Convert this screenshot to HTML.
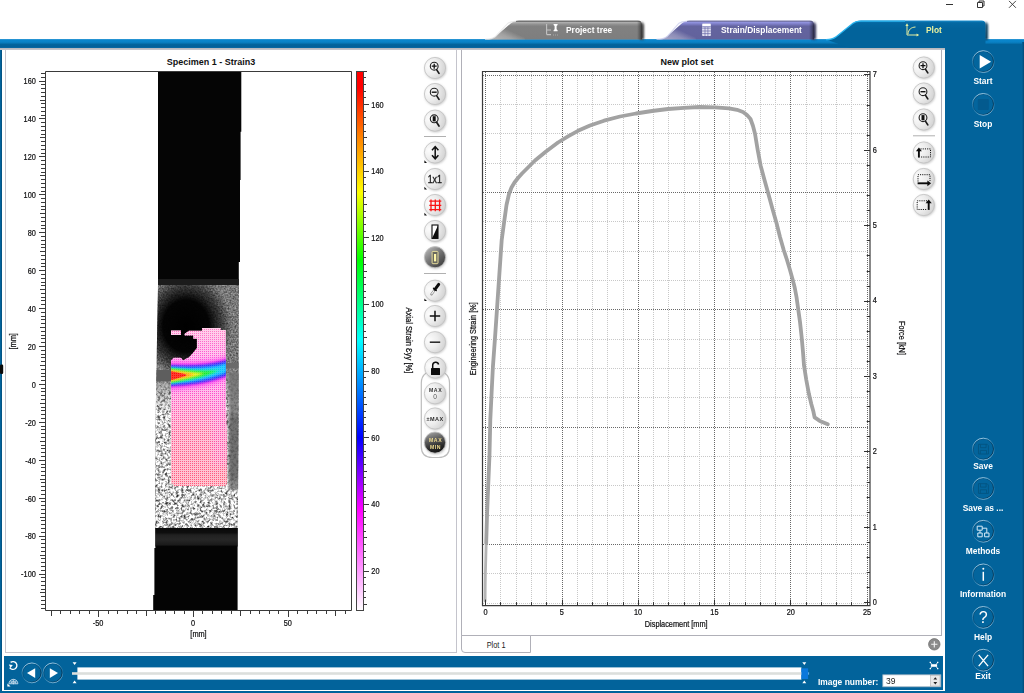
<!DOCTYPE html>
<html><head><meta charset="utf-8"><title>Plot</title>
<style>
html,body{margin:0;padding:0;}
body{width:1024px;height:693px;overflow:hidden;position:relative;background:#fff;font-family:"Liberation Sans",sans-serif;}
.abs{position:absolute;}
.lbl{position:absolute;color:#fff;font-weight:bold;font-size:10px;text-align:center;white-space:nowrap;width:78px;left:946px;}
svg{position:absolute;left:0;top:0;overflow:visible;will-change:transform;}
text{font-family:"Liberation Sans",sans-serif;}
</style></head><body>
<div class="abs" style="left:0;top:39px;width:1024px;height:9px;background:linear-gradient(#3f9fd8 0%,#0a86cc 12%,#0a82c6 35%,#02639b 62%,#02609a 85%,#0a6aa4 100%);"></div>
<div class="abs" style="left:0;top:48px;width:946px;height:2px;background:linear-gradient(#b4b4b8,#c8c8d0);"></div>
<div class="abs" style="left:0;top:49.5px;width:2px;height:644px;background:linear-gradient(90deg,#02639b 60%,#013a5e);"></div>
<div class="abs" style="left:944.9px;top:44px;width:79.1px;height:649px;background:#02639b;"></div>
<div class="abs" style="left:1021.5px;top:42px;width:2.5px;height:651px;background:linear-gradient(90deg,#02639b,#014a76);"></div>
<div class="abs" style="left:4.2px;top:656.2px;width:938.8px;height:33.5px;background:#02639b;"></div>
<div class="abs" style="left:0;top:691px;width:946px;height:2px;background:#02639b;"></div>
<div class="abs" style="left:5px;top:50px;width:452px;height:603px;border:1px solid #c4c4cc;border-top:none;box-sizing:border-box;background:#fff;"></div>
<div class="abs" style="left:461px;top:50px;width:481px;height:586px;border:1px solid #b0b0b8;border-top:none;box-sizing:border-box;background:#fff;"></div>
<div class="abs" style="left:461px;top:635px;width:70px;height:18px;border:1px solid #b0b0b8;border-radius:0 0 0 4px;box-sizing:border-box;background:#fff;font-size:8.4px;color:#222;text-align:center;line-height:18px;text-indent:0.4px;"><span style="display:inline-block;transform:scaleX(0.88)">Plot 1</span></div>
<div class="abs" style="left:110.7px;top:55.6px;width:200px;text-align:center;font-weight:bold;font-size:9.6px;color:#111;transform:scaleX(0.9375);">Specimen 1 - Strain3</div>
<div class="abs" style="left:587.2px;top:55.6px;width:200px;text-align:center;font-weight:bold;font-size:9.6px;color:#111;transform:scaleX(0.9375);">New plot set</div>
<svg width="1024" height="693" viewBox="0 0 1024 693">
<defs>
<linearGradient id="cbar" x1="0" y1="0" x2="0" y2="1"><stop offset="0" stop-color="#ff0000"/><stop offset="0.03" stop-color="#ff0000"/><stop offset="0.12" stop-color="#ff8000"/><stop offset="0.2245" stop-color="#ffff00"/><stop offset="0.35" stop-color="#00ff00"/><stop offset="0.4985" stop-color="#00ffff"/><stop offset="0.679" stop-color="#0000ff"/><stop offset="0.813" stop-color="#ff00ff"/><stop offset="1" stop-color="#ffffff"/></linearGradient>
<filter id="spk" x="0" y="0" width="100%" height="100%" color-interpolation-filters="sRGB"><feTurbulence type="fractalNoise" baseFrequency="0.6" numOctaves="2" seed="7" result="n"/><feColorMatrix in="n" type="matrix" values="0.6 0 0 0 0.17  0.6 0 0 0 0.17  0.6 0 0 0 0.17  0 0 0 0 1"/><feGaussianBlur stdDeviation="0.5"/></filter>
<filter id="spk2" x="0" y="0" width="100%" height="100%" color-interpolation-filters="sRGB"><feTurbulence type="fractalNoise" baseFrequency="0.38" numOctaves="3" seed="11" result="n"/><feColorMatrix in="n" type="matrix" values="0 1.9 0 0 -0.14  0 1.9 0 0 -0.14  0 1.9 0 0 -0.14  0 0 0 0 1"/><feGaussianBlur stdDeviation="0.5"/></filter>
<linearGradient id="mk" x1="0" y1="0" x2="0" y2="1"><stop offset="0.33" stop-color="#000"/><stop offset="0.52" stop-color="#fff"/></linearGradient>
<mask id="lowmask" maskUnits="userSpaceOnUse" x="150" y="280" width="95" height="255"><rect x="150" y="280" width="95" height="255" fill="url(#mk)"/></mask>
<linearGradient id="grip2" x1="0" y1="0" x2="0" y2="1"><stop offset="0" stop-color="#0a0a0a"/><stop offset="0.25" stop-color="#0e0e0e"/><stop offset="0.38" stop-color="#212121"/><stop offset="0.62" stop-color="#272727"/><stop offset="0.9" stop-color="#1b1b1b"/><stop offset="1" stop-color="#050505"/></linearGradient>
<filter id="b05"><feGaussianBlur stdDeviation="0.6"/></filter>
<linearGradient id="pinkg" x1="0" y1="0" x2="0" y2="1"><stop offset="0" stop-color="#ff82c4"/><stop offset="0.12" stop-color="#ff62cc"/><stop offset="0.3" stop-color="#ff44dc"/><stop offset="0.45" stop-color="#ff50bc"/><stop offset="0.65" stop-color="#ff5690"/><stop offset="1" stop-color="#ff5a7a"/></linearGradient>
<filter id="b1"><feGaussianBlur stdDeviation="0.9"/></filter>
<filter id="b2"><feGaussianBlur stdDeviation="2"/></filter>
<filter id="b5"><feGaussianBlur stdDeviation="5"/></filter>
<radialGradient id="blob" cx="0.5" cy="0.5" r="0.5"><stop offset="0" stop-color="#000" stop-opacity="1"/><stop offset="0.5" stop-color="#000" stop-opacity="0.97"/><stop offset="0.78" stop-color="#000" stop-opacity="0.5"/><stop offset="1" stop-color="#000" stop-opacity="0"/></radialGradient>
<linearGradient id="shade" x1="0" y1="0" x2="0" y2="1"><stop offset="0" stop-color="#000" stop-opacity="0.45"/><stop offset="0.35" stop-color="#000" stop-opacity="0.3"/><stop offset="0.6" stop-color="#fff" stop-opacity="0.0"/><stop offset="1" stop-color="#fff" stop-opacity="0.12"/></linearGradient>
<pattern id="grid" width="1.9" height="1.9" patternUnits="userSpaceOnUse" x="171" y="328"><rect width="1.9" height="1.9" fill="#fff" fill-opacity="0.55"/><rect width="1.9" height="0.8" fill="#ff3058" fill-opacity="0.5"/><rect width="0.8" height="1.9" fill="#ff3058" fill-opacity="0.5"/></pattern>
<clipPath id="ovl"><polygon points="184.6,333.7 189,330.8 202,330.8 202,328 220.7,328 220.7,330 225.8,330 225.8,395 226.8,440 226.8,484 225,486 174,486 173.5,484 171,483 171,360.4 173.8,357.8 181,357.8 183.2,360.4 185.4,359 189,357.2 193.3,352.5 196.9,348.1 196.9,338.8 193.3,338.8 193.3,335.6 184.6,335.6"/><polygon points="171,330.4 181,330.4 181,335 171,335"/></clipPath>
<clipPath id="spec"><polygon points="158,285 239,285 238.6,400 237.8,528.5 155.2,528.5 155.6,420 157,340"/></clipPath>
</defs><defs>
<radialGradient id="btn" cx="0.22" cy="0.4" r="0.85"><stop offset="0" stop-color="#fcfcfc"/><stop offset="0.5" stop-color="#ececec"/><stop offset="1" stop-color="#cfcfcf"/></radialGradient>
<linearGradient id="btnd" x1="0.15" y1="0.1" x2="0.85" y2="0.9"><stop offset="0" stop-color="#b0b0b0"/><stop offset="0.4" stop-color="#7c7c7c"/><stop offset="1" stop-color="#3e3e3e"/></linearGradient>
<linearGradient id="btnk" x1="0.3" y1="0" x2="0.6" y2="1"><stop offset="0" stop-color="#a0a0a0"/><stop offset="0.35" stop-color="#606060"/><stop offset="0.75" stop-color="#262626"/><stop offset="1" stop-color="#141414"/></linearGradient>
<linearGradient id="ring" x1="0.15" y1="0.1" x2="0.85" y2="0.9"><stop offset="0" stop-color="#9cc6e2"/><stop offset="0.5" stop-color="#3c86b4"/><stop offset="1" stop-color="#05304e"/></linearGradient>
<linearGradient id="ringL" x1="0.3" y1="0" x2="0.6" y2="1"><stop offset="0" stop-color="#c4e2f4" stop-opacity="0.95"/><stop offset="0.35" stop-color="#9ccbe6" stop-opacity="0.35"/><stop offset="0.6" stop-color="#9ccbe6" stop-opacity="0.15"/><stop offset="1" stop-color="#b0d6ee" stop-opacity="0.75"/></linearGradient>
<linearGradient id="ringD" x1="0" y1="0.2" x2="1" y2="0.7"><stop offset="0" stop-color="#0a3a5c" stop-opacity="0.7"/><stop offset="0.4" stop-color="#0a3a5c" stop-opacity="0.25"/><stop offset="1" stop-color="#03263e" stop-opacity="0.95"/></linearGradient>
<linearGradient id="tabg" x1="0" y1="0" x2="0" y2="1"><stop offset="0" stop-color="#6c6c6c"/><stop offset="0.05" stop-color="#707070"/><stop offset="0.1" stop-color="#aeaeae"/><stop offset="0.2" stop-color="#929292"/><stop offset="0.3" stop-color="#818181"/><stop offset="1" stop-color="#7e7e7e"/></linearGradient>
<linearGradient id="tabp" x1="0" y1="0" x2="0" y2="1"><stop offset="0" stop-color="#7272a6"/><stop offset="0.05" stop-color="#7676aa"/><stop offset="0.1" stop-color="#9092de"/><stop offset="0.2" stop-color="#7a7ac2"/><stop offset="0.3" stop-color="#64649f"/><stop offset="1" stop-color="#62629c"/></linearGradient>
<linearGradient id="tabb" x1="0" y1="0" x2="0" y2="1"><stop offset="0" stop-color="#1a8fd0"/><stop offset="0.08" stop-color="#0468a2"/><stop offset="0.3" stop-color="#02639b"/><stop offset="1" stop-color="#02639b"/></linearGradient>
<linearGradient id="tabedge" x1="0" y1="0" x2="1" y2="0"><stop offset="0" stop-color="#000" stop-opacity="0"/><stop offset="0.6" stop-color="#000" stop-opacity="0.3"/><stop offset="1" stop-color="#000" stop-opacity="0.6"/></linearGradient>
<linearGradient id="tabsl" x1="0" y1="1" x2="0.75" y2="0.2"><stop offset="0" stop-color="#fff" stop-opacity="0.9"/><stop offset="0.45" stop-color="#fff" stop-opacity="0.5"/><stop offset="0.7" stop-color="#fff" stop-opacity="0"/></linearGradient>
<filter id="sh1" x="-20%" y="-20%" width="150%" height="150%"><feGaussianBlur stdDeviation="0.8"/></filter>
</defs><g id="leftplot">
<path d="M158,72 H241.3 V131.8 H240.6 V180 H240 V262 H238.8 V285 H158 Z" fill="#050505"/>
<rect x="158" y="279" width="80.8" height="6.5" fill="#1c1c1c"/>
<g clip-path="url(#spec)">
<rect x="155" y="285" width="84" height="244" fill="#999" filter="url(#spk)"/>
<g mask="url(#lowmask)"><rect x="155" y="285" width="84" height="244" fill="#999" filter="url(#spk2)"/></g>
<rect x="228.5" y="372" width="12" height="118" fill="#6c6c6c" fill-opacity="0.78" filter="url(#b1)"/>
<rect x="229" y="415" width="11" height="65" fill="#3c3c3c" fill-opacity="0.35" filter="url(#b2)"/>
<ellipse cx="186" cy="326" rx="46" ry="52" fill="url(#blob)"/>
<rect x="155" y="370" width="16.5" height="11.5" fill="#5e5e5e"/>
<rect x="226" y="363" width="13" height="5.5" fill="#6a6a6a"/>
</g>
<path d="M155.4,528 H237.6 V610 H153.2 V595 H154.4 V548 H155.4 Z" fill="#040404"/>
<rect x="155.4" y="528" width="82.2" height="18.5" fill="url(#grip2)"/>
<g clip-path="url(#ovl)">
<rect x="170" y="327" width="58" height="160" fill="url(#pinkg)"/>
<rect x="212" y="385" width="16" height="80" fill="#ff40e0" fill-opacity="0.35" filter="url(#b5)"/>
<path d="M171.5,327V488M173.5,327V488M175.5,327V488M177.5,327V488M179.5,327V488M181.5,327V488M183.5,327V488M185.5,327V488M187.5,327V488M189.5,327V488M191.5,327V488M193.5,327V488M195.5,327V488M197.5,327V488M199.5,327V488M201.5,327V488M203.5,327V488M205.5,327V488M207.5,327V488M209.5,327V488M211.5,327V488M213.5,327V488M215.5,327V488M217.5,327V488M219.5,327V488M221.5,327V488M223.5,327V488M225.5,327V488M227.5,327V488M170,328.5H228M170,330.5H228M170,332.5H228M170,334.5H228M170,336.5H228M170,338.5H228M170,340.5H228M170,342.5H228M170,344.5H228M170,346.5H228M170,348.5H228M170,350.5H228M170,352.5H228M170,354.5H228M170,356.5H228M170,358.5H228M170,360.5H228M170,362.5H228M170,364.5H228M170,366.5H228M170,368.5H228M170,370.5H228M170,372.5H228M170,374.5H228M170,376.5H228M170,378.5H228M170,380.5H228M170,382.5H228M170,384.5H228M170,386.5H228M170,388.5H228M170,390.5H228M170,392.5H228M170,394.5H228M170,396.5H228M170,398.5H228M170,400.5H228M170,402.5H228M170,404.5H228M170,406.5H228M170,408.5H228M170,410.5H228M170,412.5H228M170,414.5H228M170,416.5H228M170,418.5H228M170,420.5H228M170,422.5H228M170,424.5H228M170,426.5H228M170,428.5H228M170,430.5H228M170,432.5H228M170,434.5H228M170,436.5H228M170,438.5H228M170,440.5H228M170,442.5H228M170,444.5H228M170,446.5H228M170,448.5H228M170,450.5H228M170,452.5H228M170,454.5H228M170,456.5H228M170,458.5H228M170,460.5H228M170,462.5H228M170,464.5H228M170,466.5H228M170,468.5H228M170,470.5H228M170,472.5H228M170,474.5H228M170,476.5H228M170,478.5H228M170,480.5H228M170,482.5H228M170,484.5H228M170,486.5H228" stroke="#fff" stroke-opacity="0.56" stroke-width="1" fill="none" shape-rendering="crispEdges"/>
<polygon points="166,360.75 168.5,360.67 171,360.6 173.5,360.69 176,360.77 178.5,360.84 181,360.91 183.5,360.96 186,361 188.5,361.01 191,361 193.5,360.97 196,360.9 198.5,360.8 201,360.66 203.5,360.48 206,360.26 208.5,359.99 211,359.67 213.5,359.3 216,358.87 218.5,358.38 221,357.82 223.5,357.2 226,356.5 228.5,355.57 231,354.56 231,377.56 228.5,378.57 226,379.5 223.5,380.51 221,381.46 218.5,382.33 216,383.14 213.5,383.89 211,384.58 208.5,385.22 206,385.81 203.5,386.35 201,386.84 198.5,387.3 196,387.72 193.5,388.1 191,388.46 188.5,388.78 186,389.09 183.5,389.37 181,389.64 178.5,389.89 176,390.13 173.5,390.37 171,390.6 168.5,390.67 166,390.75" fill="#ff50ea" filter="url(#b2)"/>
<polygon points="166,363.85 168.5,363.77 171,363.7 173.5,363.75 176,363.8 178.5,363.83 181,363.86 183.5,363.88 186,363.88 188.5,363.86 191,363.81 193.5,363.74 196,363.64 198.5,363.5 201,363.33 203.5,363.11 206,362.85 208.5,362.55 211,362.19 213.5,361.78 216,361.31 218.5,360.79 221,360.19 223.5,359.53 226,358.8 228.5,357.87 231,356.86 231,375.26 228.5,376.27 226,377.2 223.5,378.18 221,379.08 218.5,379.92 216,380.7 213.5,381.41 211,382.06 208.5,382.67 206,383.22 203.5,383.72 201,384.18 198.5,384.6 196,384.98 193.5,385.33 191,385.65 188.5,385.94 186,386.21 183.5,386.45 181,386.68 178.5,386.9 176,387.1 173.5,387.3 171,387.5 168.5,387.57 166,387.65" fill="#ee20f0" filter="url(#b1)"/>
<polygon points="166,365.15 168.5,365.07 171,365 173.5,365.05 176,365.1 178.5,365.13 181,365.16 183.5,365.18 186,365.18 188.5,365.16 191,365.11 193.5,365.04 196,364.94 198.5,364.8 201,364.63 203.5,364.41 206,364.15 208.5,363.85 211,363.49 213.5,363.08 216,362.61 218.5,362.09 221,361.49 223.5,360.83 226,360.1 228.5,359.17 231,358.16 231,373.96 228.5,374.97 226,375.9 223.5,376.88 221,377.78 218.5,378.62 216,379.4 213.5,380.11 211,380.76 208.5,381.37 206,381.92 203.5,382.42 201,382.88 198.5,383.3 196,383.68 193.5,384.03 191,384.35 188.5,384.64 186,384.91 183.5,385.15 181,385.38 178.5,385.6 176,385.8 173.5,386 171,386.2 168.5,386.27 166,386.35" fill="#7010f0" filter="url(#b1)"/>
<polygon points="166,366.15 168.5,366.07 171,366 173.5,366.05 176,366.1 178.5,366.15 181,366.18 183.5,366.2 186,366.21 188.5,366.19 191,366.15 193.5,366.08 196,365.98 198.5,365.85 201,365.68 203.5,365.47 206,365.22 208.5,364.92 211,364.56 213.5,364.16 216,363.7 218.5,363.17 221,362.58 223.5,361.93 226,361.2 228.5,360.27 231,359.26 231,372.86 228.5,373.87 226,374.8 223.5,375.78 221,376.69 218.5,377.54 216,378.31 213.5,379.03 211,379.69 208.5,380.3 206,380.85 203.5,381.36 201,381.83 198.5,382.25 196,382.64 193.5,382.99 191,383.31 188.5,383.61 186,383.88 183.5,384.13 181,384.36 178.5,384.58 176,384.8 173.5,385 171,385.2 168.5,385.27 166,385.35" fill="#1030ff" filter="url(#b1)"/>
<polygon points="166,367.55 168.5,367.47 171,367.4 173.5,367.5 176,367.6 178.5,367.68 181,367.76 183.5,367.83 186,367.88 188.5,367.91 191,367.91 193.5,367.89 196,367.84 198.5,367.75 201,367.63 203.5,367.46 206,367.25 208.5,367 211,366.69 213.5,366.33 216,365.91 218.5,365.44 221,364.89 223.5,364.28 226,363.6 228.5,362.67 231,361.66 231,370.46 228.5,371.47 226,372.4 223.5,373.43 221,374.38 218.5,375.27 216,376.1 213.5,376.86 211,377.56 208.5,378.22 206,378.82 203.5,379.37 201,379.88 198.5,380.35 196,380.78 193.5,381.18 191,381.55 188.5,381.89 186,382.21 183.5,382.5 181,382.78 178.5,383.05 176,383.3 173.5,383.55 171,383.8 168.5,383.87 166,383.95" fill="#00c0ff" filter="url(#b1)"/>
<polygon points="166,367.76 168.5,367.98 171,368.2 173.5,368.42 176,368.65 178.5,368.87 181,369.08 183.5,369.29 186,369.48 188.5,369.65 191,369.81 193.5,369.95 196,370.06 198.5,370.14 201,370.2 203.5,370.22 206,370.21 208.5,370.17 211,370.09 213.5,369.97 216,369.83 218.5,369.68 221,369.64 221,369.64 218.5,371.03 216,372.18 213.5,373.22 211,374.17 208.5,375.05 206,375.86 203.5,376.61 201,377.31 198.5,377.96 196,378.56 193.5,379.12 191,379.65 188.5,380.14 186,380.6 183.5,381.04 181,381.46 178.5,381.86 176,382.25 173.5,382.63 171,383 168.5,383.37 166,383.74" fill="#00f0a0" filter="url(#b1)"/>
<polygon points="166,368.13 168.5,368.36 171,368.6 173.5,368.84 176,369.08 178.5,369.32 181,369.55 183.5,369.77 186,369.98 188.5,370.18 191,370.36 193.5,370.51 196,370.65 198.5,370.76 201,370.85 203.5,370.9 206,370.93 208.5,370.94 211,370.92 213.5,370.9 216,371 216,371 213.5,372.29 211,373.34 208.5,374.28 206,375.14 203.5,375.93 201,376.66 198.5,377.34 196,377.97 193.5,378.56 191,379.1 188.5,379.62 186,380.1 183.5,380.56 181,381 178.5,381.42 176,381.82 173.5,382.21 171,382.6 168.5,382.98 166,383.37" fill="#10e820" filter="url(#b1)"/>
<polygon points="166,369.26 168.5,369.52 171,369.8 173.5,370.08 176,370.36 178.5,370.65 181,370.93 183.5,371.2 186,371.47 188.5,371.73 191,371.98 193.5,372.21 196,372.44 198.5,372.67 201,372.9 203.5,373.21 203.5,373.62 201,374.61 198.5,375.43 196,376.18 193.5,376.86 191,377.48 188.5,378.07 186,378.61 183.5,379.13 181,379.62 178.5,380.09 176,380.54 173.5,380.97 171,381.4 168.5,381.82 166,382.24" fill="#f4f000" filter="url(#b1)"/>
<polygon points="166,369.9 168.5,370.24 171,370.6 173.5,370.97 176,371.34 178.5,371.72 181,372.11 183.5,372.5 186,372.89 188.5,373.31 191,373.75 193.5,374.3 193.5,374.77 191,375.71 188.5,376.49 186,377.19 183.5,377.84 181,378.44 178.5,379.01 176,379.56 173.5,380.09 171,380.6 168.5,381.1 166,381.6" fill="#ff9000" filter="url(#b1)"/>
<polygon points="166,370.31 168.5,370.75 171,371.2 173.5,371.67 176,372.15 178.5,372.66 181,373.18 183.5,373.75 186,374.4 186,375.69 183.5,376.58 181,377.36 178.5,378.08 176,378.75 173.5,379.38 171,380 168.5,380.6 166,381.19" fill="#ff1000" filter="url(#b05)"/>
<path d="M171.5,327V488M173.5,327V488M175.5,327V488M177.5,327V488M179.5,327V488M181.5,327V488M183.5,327V488M185.5,327V488M187.5,327V488M189.5,327V488M191.5,327V488M193.5,327V488M195.5,327V488M197.5,327V488M199.5,327V488M201.5,327V488M203.5,327V488M205.5,327V488M207.5,327V488M209.5,327V488M211.5,327V488M213.5,327V488M215.5,327V488M217.5,327V488M219.5,327V488M221.5,327V488M223.5,327V488M225.5,327V488M227.5,327V488M170,328.5H228M170,330.5H228M170,332.5H228M170,334.5H228M170,336.5H228M170,338.5H228M170,340.5H228M170,342.5H228M170,344.5H228M170,346.5H228M170,348.5H228M170,350.5H228M170,352.5H228M170,354.5H228M170,356.5H228M170,358.5H228M170,360.5H228M170,362.5H228M170,364.5H228M170,366.5H228M170,368.5H228M170,370.5H228M170,372.5H228M170,374.5H228M170,376.5H228M170,378.5H228M170,380.5H228M170,382.5H228M170,384.5H228M170,386.5H228M170,388.5H228M170,390.5H228M170,392.5H228M170,394.5H228M170,396.5H228M170,398.5H228M170,400.5H228M170,402.5H228M170,404.5H228M170,406.5H228M170,408.5H228M170,410.5H228M170,412.5H228M170,414.5H228M170,416.5H228M170,418.5H228M170,420.5H228M170,422.5H228M170,424.5H228M170,426.5H228M170,428.5H228M170,430.5H228M170,432.5H228M170,434.5H228M170,436.5H228M170,438.5H228M170,440.5H228M170,442.5H228M170,444.5H228M170,446.5H228M170,448.5H228M170,450.5H228M170,452.5H228M170,454.5H228M170,456.5H228M170,458.5H228M170,460.5H228M170,462.5H228M170,464.5H228M170,466.5H228M170,468.5H228M170,470.5H228M170,472.5H228M170,474.5H228M170,476.5H228M170,478.5H228M170,480.5H228M170,482.5H228M170,484.5H228M170,486.5H228" stroke="#fff" stroke-opacity="0.2" stroke-width="1" fill="none" shape-rendering="crispEdges"/>
</g>
<path d="M45.5,71.5 V610.5 H351.5 V71.5 Z" fill="none" stroke="#3a3a3a" stroke-width="1"/>
<path d="M41.2,608.13h4.3M41.2,604.34h4.3M41.2,600.54h4.3M41.2,596.75h4.3M40.1,592.96h5.4M41.2,589.17h4.3M41.2,585.38h4.3M41.2,581.58h4.3M41.2,577.79h4.3M39,574h6.5M41.2,570.21h4.3M41.2,566.42h4.3M41.2,562.62h4.3M41.2,558.83h4.3M40.1,555.04h5.4M41.2,551.25h4.3M41.2,547.46h4.3M41.2,543.66h4.3M41.2,539.87h4.3M39,536.08h6.5M41.2,532.29h4.3M41.2,528.5h4.3M41.2,524.7h4.3M41.2,520.91h4.3M40.1,517.12h5.4M41.2,513.33h4.3M41.2,509.54h4.3M41.2,505.74h4.3M41.2,501.95h4.3M39,498.16h6.5M41.2,494.37h4.3M41.2,490.58h4.3M41.2,486.78h4.3M41.2,482.99h4.3M40.1,479.2h5.4M41.2,475.41h4.3M41.2,471.62h4.3M41.2,467.82h4.3M41.2,464.03h4.3M39,460.24h6.5M41.2,456.45h4.3M41.2,452.66h4.3M41.2,448.86h4.3M41.2,445.07h4.3M40.1,441.28h5.4M41.2,437.49h4.3M41.2,433.7h4.3M41.2,429.9h4.3M41.2,426.11h4.3M39,422.32h6.5M41.2,418.53h4.3M41.2,414.74h4.3M41.2,410.94h4.3M41.2,407.15h4.3M40.1,403.36h5.4M41.2,399.57h4.3M41.2,395.78h4.3M41.2,391.98h4.3M41.2,388.19h4.3M39,384.4h6.5M41.2,380.61h4.3M41.2,376.82h4.3M41.2,373.02h4.3M41.2,369.23h4.3M40.1,365.44h5.4M41.2,361.65h4.3M41.2,357.86h4.3M41.2,354.06h4.3M41.2,350.27h4.3M39,346.48h6.5M41.2,342.69h4.3M41.2,338.9h4.3M41.2,335.1h4.3M41.2,331.31h4.3M40.1,327.52h5.4M41.2,323.73h4.3M41.2,319.94h4.3M41.2,316.14h4.3M41.2,312.35h4.3M39,308.56h6.5M41.2,304.77h4.3M41.2,300.98h4.3M41.2,297.18h4.3M41.2,293.39h4.3M40.1,289.6h5.4M41.2,285.81h4.3M41.2,282.02h4.3M41.2,278.22h4.3M41.2,274.43h4.3M39,270.64h6.5M41.2,266.85h4.3M41.2,263.06h4.3M41.2,259.26h4.3M41.2,255.47h4.3M40.1,251.68h5.4M41.2,247.89h4.3M41.2,244.1h4.3M41.2,240.3h4.3M41.2,236.51h4.3M39,232.72h6.5M41.2,228.93h4.3M41.2,225.14h4.3M41.2,221.34h4.3M41.2,217.55h4.3M40.1,213.76h5.4M41.2,209.97h4.3M41.2,206.18h4.3M41.2,202.38h4.3M41.2,198.59h4.3M39,194.8h6.5M41.2,191.01h4.3M41.2,187.22h4.3M41.2,183.42h4.3M41.2,179.63h4.3M40.1,175.84h5.4M41.2,172.05h4.3M41.2,168.26h4.3M41.2,164.46h4.3M41.2,160.67h4.3M39,156.88h6.5M41.2,153.09h4.3M41.2,149.3h4.3M41.2,145.5h4.3M41.2,141.71h4.3M40.1,137.92h5.4M41.2,134.13h4.3M41.2,130.34h4.3M41.2,126.54h4.3M41.2,122.75h4.3M39,118.96h6.5M41.2,115.17h4.3M41.2,111.38h4.3M41.2,107.58h4.3M41.2,103.79h4.3M40.1,100h5.4M41.2,96.21h4.3M41.2,92.42h4.3M41.2,88.62h4.3M41.2,84.83h4.3M39,81.04h6.5M41.2,77.25h4.3M41.2,73.46h4.3" stroke="#3a3a3a" stroke-width="1" fill="none" shape-rendering="crispEdges"/>
<text transform="translate(35.8,577.4) scale(0.875,1)" font-size="8.4" text-anchor="end" fill="#101012" stroke="#101012" stroke-width="0.22">-100</text>
<text transform="translate(35.8,539.48) scale(0.875,1)" font-size="8.4" text-anchor="end" fill="#101012" stroke="#101012" stroke-width="0.22">-80</text>
<text transform="translate(35.8,501.56) scale(0.875,1)" font-size="8.4" text-anchor="end" fill="#101012" stroke="#101012" stroke-width="0.22">-60</text>
<text transform="translate(35.8,463.64) scale(0.875,1)" font-size="8.4" text-anchor="end" fill="#101012" stroke="#101012" stroke-width="0.22">-40</text>
<text transform="translate(35.8,425.72) scale(0.875,1)" font-size="8.4" text-anchor="end" fill="#101012" stroke="#101012" stroke-width="0.22">-20</text>
<text transform="translate(35.8,387.8) scale(0.875,1)" font-size="8.4" text-anchor="end" fill="#101012" stroke="#101012" stroke-width="0.22">0</text>
<text transform="translate(35.8,349.88) scale(0.875,1)" font-size="8.4" text-anchor="end" fill="#101012" stroke="#101012" stroke-width="0.22">20</text>
<text transform="translate(35.8,311.96) scale(0.875,1)" font-size="8.4" text-anchor="end" fill="#101012" stroke="#101012" stroke-width="0.22">40</text>
<text transform="translate(35.8,274.04) scale(0.875,1)" font-size="8.4" text-anchor="end" fill="#101012" stroke="#101012" stroke-width="0.22">60</text>
<text transform="translate(35.8,236.12) scale(0.875,1)" font-size="8.4" text-anchor="end" fill="#101012" stroke="#101012" stroke-width="0.22">80</text>
<text transform="translate(35.8,198.2) scale(0.875,1)" font-size="8.4" text-anchor="end" fill="#101012" stroke="#101012" stroke-width="0.22">100</text>
<text transform="translate(35.8,160.28) scale(0.875,1)" font-size="8.4" text-anchor="end" fill="#101012" stroke="#101012" stroke-width="0.22">120</text>
<text transform="translate(35.8,122.36) scale(0.875,1)" font-size="8.4" text-anchor="end" fill="#101012" stroke="#101012" stroke-width="0.22">140</text>
<text transform="translate(35.8,84.44) scale(0.875,1)" font-size="8.4" text-anchor="end" fill="#101012" stroke="#101012" stroke-width="0.22">160</text>
<path d="M51.22,610.5v5M60.71,610.5v3M70.19,610.5v3M79.68,610.5v3M89.16,610.5v3M98.65,610.5v6M108.14,610.5v3M117.62,610.5v3M127.11,610.5v3M136.59,610.5v3M146.07,610.5v5M155.56,610.5v3M165.04,610.5v3M174.53,610.5v3M184.01,610.5v3M193.5,610.5v6M202.99,610.5v3M212.47,610.5v3M221.96,610.5v3M231.44,610.5v3M240.93,610.5v5M250.41,610.5v3M259.89,610.5v3M269.38,610.5v3M278.87,610.5v3M288.35,610.5v6M297.84,610.5v3M307.32,610.5v3M316.81,610.5v3M326.29,610.5v3M335.77,610.5v5M345.26,610.5v3" stroke="#3a3a3a" stroke-width="1" fill="none" shape-rendering="crispEdges"/>
<text transform="translate(98.15,626) scale(0.875,1)" font-size="8.4" text-anchor="middle" fill="#101012" stroke="#101012" stroke-width="0.22">-50</text>
<text transform="translate(193,626) scale(0.875,1)" font-size="8.4" text-anchor="middle" fill="#101012" stroke="#101012" stroke-width="0.22">0</text>
<text transform="translate(287.85,626) scale(0.875,1)" font-size="8.4" text-anchor="middle" fill="#101012" stroke="#101012" stroke-width="0.22">50</text>
<text transform="translate(198.5,636.5) scale(0.875,1)" font-size="8.4" text-anchor="middle" fill="#101012" stroke="#101012" stroke-width="0.22">[mm]</text>
<text transform="translate(15.6,341.3) rotate(-90) scale(0.875,1)" font-size="8.4" text-anchor="middle" fill="#101012" stroke="#101012" stroke-width="0.22">[mm]</text>
<rect x="356.5" y="71.5" width="7" height="539" fill="url(#cbar)" stroke="#444" stroke-width="1"/>
<path d="M364,604.42h3M364,597.76h2M364,591.09h2M364,584.43h2M364,577.76h2M364,571.1h4.5M364,564.44h2M364,557.77h2M364,551.11h2M364,544.44h2M364,537.78h3M364,531.12h2M364,524.45h2M364,517.79h2M364,511.12h2M364,504.46h4.5M364,497.8h2M364,491.13h2M364,484.47h2M364,477.8h2M364,471.14h3M364,464.48h2M364,457.81h2M364,451.15h2M364,444.48h2M364,437.82h4.5M364,431.16h2M364,424.49h2M364,417.83h2M364,411.16h2M364,404.5h3M364,397.84h2M364,391.17h2M364,384.51h2M364,377.84h2M364,371.18h4.5M364,364.52h2M364,357.85h2M364,351.19h2M364,344.52h2M364,337.86h3M364,331.2h2M364,324.53h2M364,317.87h2M364,311.2h2M364,304.54h4.5M364,297.88h2M364,291.21h2M364,284.55h2M364,277.88h2M364,271.22h3M364,264.56h2M364,257.89h2M364,251.23h2M364,244.56h2M364,237.9h4.5M364,231.24h2M364,224.57h2M364,217.91h2M364,211.24h2M364,204.58h3M364,197.92h2M364,191.25h2M364,184.59h2M364,177.92h2M364,171.26h4.5M364,164.6h2M364,157.93h2M364,151.27h2M364,144.6h2M364,137.94h3M364,131.28h2M364,124.61h2M364,117.95h2M364,111.28h2M364,104.62h4.5M364,97.96h2M364,91.29h2M364,84.63h2M364,77.96h2M364,71.3h3" stroke="#3a3a3a" stroke-width="1" fill="none" shape-rendering="crispEdges"/>
<text transform="translate(371.3,574) scale(0.875,1)" font-size="8.4" text-anchor="start" fill="#101012" stroke="#101012" stroke-width="0.22">20</text>
<text transform="translate(371.3,507.36) scale(0.875,1)" font-size="8.4" text-anchor="start" fill="#101012" stroke="#101012" stroke-width="0.22">40</text>
<text transform="translate(371.3,440.72) scale(0.875,1)" font-size="8.4" text-anchor="start" fill="#101012" stroke="#101012" stroke-width="0.22">60</text>
<text transform="translate(371.3,374.08) scale(0.875,1)" font-size="8.4" text-anchor="start" fill="#101012" stroke="#101012" stroke-width="0.22">80</text>
<text transform="translate(371.3,307.44) scale(0.875,1)" font-size="8.4" text-anchor="start" fill="#101012" stroke="#101012" stroke-width="0.22">100</text>
<text transform="translate(371.3,240.8) scale(0.875,1)" font-size="8.4" text-anchor="start" fill="#101012" stroke="#101012" stroke-width="0.22">120</text>
<text transform="translate(371.3,174.16) scale(0.875,1)" font-size="8.4" text-anchor="start" fill="#101012" stroke="#101012" stroke-width="0.22">140</text>
<text transform="translate(371.3,107.52) scale(0.875,1)" font-size="8.4" text-anchor="start" fill="#101012" stroke="#101012" stroke-width="0.22">160</text>
<text transform="translate(405.9,340.4) rotate(90) scale(0.908,1)" font-size="8.4" text-anchor="middle" fill="#101012" stroke="#101012" stroke-width="0.22">Axial Strain Ɛyy [%]</text>
</g><g id="rightplot">
<path d="M500.5,72V605M516.5,72V605M531.5,72V605M546.5,72V605M577.5,72V605M592.5,72V605M607.5,72V605M623.5,72V605M653.5,72V605M668.5,72V605M684.5,72V605M699.5,72V605M729.5,72V605M745.5,72V605M760.5,72V605M775.5,72V605M806.5,72V605M821.5,72V605M836.5,72V605M851.5,72V605M483,104.5H869M483,133.5H869M483,163.5H869M483,221.5H869M483,251.5H869M483,280.5H869M483,339.5H869M483,368.5H869M483,397.5H869M483,456.5H869M483,485.5H869M483,515.5H869M483,573.5H869M483,603.5H869" stroke="#c8c8c8" stroke-width="1" stroke-dasharray="1 1" shape-rendering="crispEdges" fill="none"/>
<path d="M485.5,72V605M562.5,72V605M638.5,72V605M714.5,72V605M790.5,72V605M867.5,72V605M483,75.5H869M483,192.5H869M483,309.5H869M483,427.5H869M483,544.5H869" stroke="#686868" stroke-width="1" stroke-dasharray="1 1" shape-rendering="crispEdges" fill="none"/>
<polyline points="485.1,601 485.2,585 485.4,573 485.8,558 486.2,543" fill="none" stroke="#b4b4b4" stroke-width="2.8" stroke-linejoin="round" stroke-linecap="round"/>
<polyline points="486.2,543 487,516 488.1,488 489.5,455 490.3,420 491.6,393 492.9,367 495,338 497,309 499.3,275 501.7,240 504,223 506.5,205 509,194 511.5,187.5 514.5,182.5 518,178 522,173.5 526,169.5 530.5,165 535,160.5 546,151.5 558,142.5 568,136.3 578,130.8 590,125.5 604,120.7 620,116.5 636,113.5 652,111 668,109 684,107.8 699.5,107 715,107.3 729,108.3 737,109.8 743,112 747,115 750.5,119 753,126 755,133.7 757.7,150 760.6,165.4 764.5,180 768.4,194 772.5,209 776.5,223 780,237 783.7,250 787,260 790,270 792.5,279 794.7,287.5 796.5,297 798,307.7 800,322 801.6,336.6 803,352 804,365.4 806.3,380 809,394.3 811.3,404 813.4,411.6 814.6,417.4 819.8,420.9 827.8,424.3" fill="none" stroke="#a2a2a2" stroke-width="3.8" stroke-linejoin="round" stroke-linecap="round"/>
<path d="M482.5,71.5 V605.6 H870 V71.5 Z" fill="none" stroke="#3a3a3a" stroke-width="1.2"/>
<path d="M485.5,605.6v-6M500.5,605.6v-3.5M516.5,605.6v-3.5M531.5,605.6v-3.5M546.5,605.6v-3.5M562.5,605.6v-6M577.5,605.6v-3.5M592.5,605.6v-3.5M607.5,605.6v-3.5M623.5,605.6v-3.5M638.5,605.6v-6M653.5,605.6v-3.5M668.5,605.6v-3.5M684.5,605.6v-3.5M699.5,605.6v-3.5M714.5,605.6v-6M729.5,605.6v-3.5M745.5,605.6v-3.5M760.5,605.6v-3.5M775.5,605.6v-3.5M790.5,605.6v-6M806.5,605.6v-3.5M821.5,605.6v-3.5M836.5,605.6v-3.5M851.5,605.6v-3.5M867.5,605.6v-6" stroke="#333" stroke-width="1" fill="none"/>
<text transform="translate(485.5,614.5) scale(0.875,1)" font-size="8.4" text-anchor="middle" fill="#101012" stroke="#101012" stroke-width="0.22">0</text>
<text transform="translate(561.8,614.5) scale(0.875,1)" font-size="8.4" text-anchor="middle" fill="#101012" stroke="#101012" stroke-width="0.22">5</text>
<text transform="translate(638.1,614.5) scale(0.875,1)" font-size="8.4" text-anchor="middle" fill="#101012" stroke="#101012" stroke-width="0.22">10</text>
<text transform="translate(714.4,614.5) scale(0.875,1)" font-size="8.4" text-anchor="middle" fill="#101012" stroke="#101012" stroke-width="0.22">15</text>
<text transform="translate(790.7,614.5) scale(0.875,1)" font-size="8.4" text-anchor="middle" fill="#101012" stroke="#101012" stroke-width="0.22">20</text>
<text transform="translate(867,614.5) scale(0.875,1)" font-size="8.4" text-anchor="middle" fill="#101012" stroke="#101012" stroke-width="0.22">25</text>
<text transform="translate(676.2,627.3) scale(0.875,1)" font-size="8.4" text-anchor="middle" fill="#101012" stroke="#101012" stroke-width="0.22">Displacement [mm]</text>
<path d="M864,602.5h6M866.7,587.5h3.3M866.7,572.5h3.3M866.7,557.5h3.3M866.7,542.5h3.3M864,527.5h6M866.7,512.5h3.3M866.7,497.5h3.3M866.7,482.5h3.3M866.7,467.5h3.3M864,451.5h6M866.7,436.5h3.3M866.7,421.5h3.3M866.7,406.5h3.3M866.7,391.5h3.3M864,376.5h6M866.7,361.5h3.3M866.7,346.5h3.3M866.7,331.5h3.3M866.7,316.5h3.3M864,301.5h6M866.7,286.5h3.3M866.7,271.5h3.3M866.7,255.5h3.3M866.7,240.5h3.3M864,225.5h6M866.7,210.5h3.3M866.7,195.5h3.3M866.7,180.5h3.3M866.7,165.5h3.3M864,150.5h6M866.7,135.5h3.3M866.7,120.5h3.3M866.7,105.5h3.3M866.7,90.5h3.3M864,74.5h6" stroke="#333" stroke-width="1" fill="none"/>
<text transform="translate(874.9,605) scale(0.875,1)" font-size="8.4" text-anchor="middle" fill="#101012" stroke="#101012" stroke-width="0.22">0</text>
<text transform="translate(874.9,529.6) scale(0.875,1)" font-size="8.4" text-anchor="middle" fill="#101012" stroke="#101012" stroke-width="0.22">1</text>
<text transform="translate(874.9,454.2) scale(0.875,1)" font-size="8.4" text-anchor="middle" fill="#101012" stroke="#101012" stroke-width="0.22">2</text>
<text transform="translate(874.9,378.8) scale(0.875,1)" font-size="8.4" text-anchor="middle" fill="#101012" stroke="#101012" stroke-width="0.22">3</text>
<text transform="translate(874.9,303.4) scale(0.875,1)" font-size="8.4" text-anchor="middle" fill="#101012" stroke="#101012" stroke-width="0.22">4</text>
<text transform="translate(874.9,228) scale(0.875,1)" font-size="8.4" text-anchor="middle" fill="#101012" stroke="#101012" stroke-width="0.22">5</text>
<text transform="translate(874.9,152.6) scale(0.875,1)" font-size="8.4" text-anchor="middle" fill="#101012" stroke="#101012" stroke-width="0.22">6</text>
<text transform="translate(874.9,77.2) scale(0.875,1)" font-size="8.4" text-anchor="middle" fill="#101012" stroke="#101012" stroke-width="0.22">7</text>
<text transform="translate(899,338) rotate(90) scale(0.875,1)" font-size="8.4" text-anchor="middle" fill="#101012" stroke="#101012" stroke-width="0.22">Force [kN]</text>
<text transform="translate(476.3,338.7) rotate(-90) scale(0.875,1)" font-size="8.4" text-anchor="middle" fill="#101012" stroke="#101012" stroke-width="0.22">Engineering Strain [%]</text>
</g><g id="chrome-icons">
<path d="M946,4.5h7" stroke="#333" stroke-width="1"/>
<path d="M977.5,2.5h5v5h-5z M979,2.5v-1.5h5v5h-1.5" fill="none" stroke="#333" stroke-width="1"/>
<path d="M1009,0.9l6.9,6.9M1015.9,0.9l-6.9,6.9" stroke="#333" stroke-width="0.9"/>
<path d="M641,22 q3,0.5 3,4 V39.5 h-4 Z" fill="#3a3a3a" filter="url(#sh1)"/><path d="M485,39.5 C490,39.5 493,38.5 495.5,36.5 L511,23.2 C513.5,21.3 515.5,20.5 519,20.5 H638 q4,0 4,4 V39.5 Z" fill="url(#tabg)"/><path d="M637,21 h1 q4,0 4,4 V39.5 h-5 Z" fill="url(#tabedge)"/><path d="M485,39.5 C490,39.5 493,38.5 495.5,36.5 L511,23.2 C513.5,21.3 515.5,20.5 519,20.5 L525,39.5 Z" fill="url(#tabsl)" clip-path="none" opacity="0.55"/><path d="M485,39.3 C490,39.3 493,38.5 495.5,36.5 L508,23.2 C510.5,21.3 512.5,21.4 516,21.4" fill="none" stroke="#e8e8e8" stroke-width="1.1" stroke-opacity="0.85"/>
<path d="M813,22 q3,0.5 3,4 V39.5 h-4 Z" fill="#2a2a50" filter="url(#sh1)"/><path d="M656.5,39.5 C661.5,39.5 664.5,38.5 667,36.5 L682,23.2 C684.5,21.3 686.5,20.5 690,20.5 H810 q4,0 4,4 V39.5 Z" fill="url(#tabp)"/><path d="M809,21 h1 q4,0 4,4 V39.5 h-5 Z" fill="url(#tabedge)"/><path d="M656.5,39.5 C661.5,39.5 664.5,38.5 667,36.5 L682,23.2 C684.5,21.3 686.5,20.5 690,20.5 L696,39.5 Z" fill="url(#tabsl)" clip-path="none" opacity="0.55"/><path d="M656.5,39.3 C661.5,39.3 664.5,38.5 667,36.5 L679,23.2 C681.5,21.3 683.5,21.4 687,21.4" fill="none" stroke="#d0d2f0" stroke-width="1.1" stroke-opacity="0.85"/>
<path d="M985,22 q3,0.5 3,4 V40 h-4 Z" fill="#01375a" filter="url(#sh1)"/>
<path d="M826,39.5 C831,39.5 834,38.5 836.5,36.5 L853,23.2 C855.5,21.3 857.5,20.5 861,20.5 H981.5 q4,0 4,4 V48 H850 L826,39.5 Z" fill="url(#tabb)"/>
<path d="M826,39.7 C831,39.7 834,38.5 836.5,36.5 L853,23.2 C855.5,21.3 857.5,21.1 861,21.1 H905" fill="none" stroke="#2bb4ee" stroke-width="1.3"/>
<path d="M546.6,24v10.6M546.6,30h4.4M546.6,34.6h4.4" stroke="#c2c2c2" stroke-width="1.1" fill="none"/>
<path d="M553.6,24h4v1l-1,1v3.2l1,1v1h-4v-1l1,-1v-3.2l-1,-1z" fill="#fff"/>
<path d="M553,35h5.4" stroke="#aaa" stroke-width="1" stroke-dasharray="1 1"/>
<rect x="702.1" y="23.6" width="8.8" height="12.5" rx="0.8" fill="#e2e2f2"/>
<rect x="702.8" y="24" width="7.4" height="2" fill="#fff"/>
<path d="M702.1,26.7h8.8" stroke="#8486bc" stroke-width="0.9"/>
<path d="M702.1,28.2h8.8M702.1,31h8.8M702.1,33.6h8.8M705,27.2v9M707.9,27.2v9" stroke="#6a6caa" stroke-width="0.7"/>
<path d="M907,25.5V35H918" fill="none" stroke="#e4eea0" stroke-width="1"/>
<path d="M907,23.3l-1.6,2.6h3.2zM919.2,35l-2.6,-1.6v3.2z" fill="#e4eea0"/>
<path d="M908,34 C908.5,29.5 911,27.3 915.5,27" fill="none" stroke="#e4eea0" stroke-width="1"/>
</g>
<g id="ltoolbar">
<circle cx="435.6" cy="68.9" r="10.8" fill="#9a9a9a" fill-opacity="0.55" filter="url(#sh1)"/><circle cx="435" cy="68" r="10.6" fill="url(#btn)" stroke="#c2c2c2" stroke-width="0.8"/><circle cx="434.2" cy="66.2" r="3.9" fill="none" stroke="#222" stroke-width="1.1"/><path d="M436.6,69.6 l2.4,3.8" stroke="#1a1a1a" stroke-width="1.7" stroke-linecap="round"/><path d="M431.7,66.2h5M434.2,63.7v5" stroke="#111" stroke-width="1.3"/>
<circle cx="435.6" cy="94.9" r="10.8" fill="#9a9a9a" fill-opacity="0.55" filter="url(#sh1)"/><circle cx="435" cy="94" r="10.6" fill="url(#btn)" stroke="#c2c2c2" stroke-width="0.8"/><circle cx="434.2" cy="92.2" r="3.9" fill="none" stroke="#222" stroke-width="1.1"/><path d="M436.6,95.6 l2.4,3.8" stroke="#1a1a1a" stroke-width="1.7" stroke-linecap="round"/><path d="M431.7,92.2h5" stroke="#111" stroke-width="1.4"/>
<circle cx="435.6" cy="121.5" r="10.8" fill="#9a9a9a" fill-opacity="0.55" filter="url(#sh1)"/><circle cx="435" cy="120.6" r="10.6" fill="url(#btn)" stroke="#c2c2c2" stroke-width="0.8"/><circle cx="434.2" cy="118.8" r="3.9" fill="none" stroke="#222" stroke-width="1.1"/><path d="M436.6,122.2 l2.4,3.8" stroke="#1a1a1a" stroke-width="1.7" stroke-linecap="round"/><rect x="432.7" y="116.2" width="3" height="5.2" fill="#111"/>
<path d="M424,136.5h22" stroke="#b0b0b0" stroke-width="1"/>
<circle cx="435.6" cy="153.4" r="10.8" fill="#9a9a9a" fill-opacity="0.55" filter="url(#sh1)"/><circle cx="435" cy="152.5" r="10.6" fill="url(#btn)" stroke="#c2c2c2" stroke-width="0.8"/><path d="M424.4,160.3 v2.6 h2.6 Z" fill="#111"/>
<path d="M435.2,146.8v11.8M432,150.2l3.2,-3.6l3.2,3.6M432,155.2l3.2,3.6l3.2,-3.6" fill="none" stroke="#111" stroke-width="1.5"/>
<circle cx="435.6" cy="179.9" r="10.8" fill="#9a9a9a" fill-opacity="0.55" filter="url(#sh1)"/><circle cx="435" cy="179" r="10.6" fill="url(#btn)" stroke="#c2c2c2" stroke-width="0.8"/><path d="M424.4,186.8 v2.6 h2.6 Z" fill="#111"/>
<text x="434.8" y="182.6" font-size="10" text-anchor="middle" fill="#1a1a1a" stroke="#1a1a1a" stroke-width="0.35" textLength="14.2" lengthAdjust="spacingAndGlyphs">1x1</text>
<circle cx="435.6" cy="205.9" r="10.8" fill="#9a9a9a" fill-opacity="0.55" filter="url(#sh1)"/><circle cx="435" cy="205" r="10.6" fill="url(#btn)" stroke="#c2c2c2" stroke-width="0.8"/><path d="M424.4,212.8 v2.6 h2.6 Z" fill="#111"/>
<path d="M429.3,201.2h12M429.3,205.4h12M429.3,209.6h12M431,199.4v11.8M435.3,199.4v11.8M439.6,199.4v11.8" stroke="#fa1414" stroke-width="1.3"/>
<circle cx="435.6" cy="231.9" r="10.8" fill="#9a9a9a" fill-opacity="0.55" filter="url(#sh1)"/><circle cx="435" cy="231" r="10.6" fill="url(#btn)" stroke="#c2c2c2" stroke-width="0.8"/>
<rect x="432" y="225" width="6" height="13.4" fill="#fff" stroke="#0c0c0c" stroke-width="1.1"/>
<path d="M438,225.6V238.4H432Z" fill="#0c0c0c"/>
<circle cx="435.6" cy="258.1" r="10.8" fill="#9a9a9a" fill-opacity="0.55" filter="url(#sh1)"/><circle cx="435" cy="257.2" r="10.6" fill="url(#btnd)" stroke="#c2c2c2" stroke-width="0.8"/>
<rect x="432.1" y="251.4" width="5.9" height="12.3" rx="0.8" fill="#6a6a60" stroke="#e6dc9a" stroke-width="1"/>
<rect x="434" y="254" width="2.2" height="7.4" fill="#fff6a8"/>
<path d="M424,273.5h22" stroke="#b0b0b0" stroke-width="1"/>
<circle cx="435.6" cy="291.6" r="10.8" fill="#9a9a9a" fill-opacity="0.55" filter="url(#sh1)"/><circle cx="435" cy="290.7" r="10.6" fill="url(#btn)" stroke="#c2c2c2" stroke-width="0.8"/><path d="M424.4,298.5 v2.6 h2.6 Z" fill="#111"/>
<path d="M434.9,289.6l-3.4,4.6" stroke="#8a8a8a" stroke-width="2.4" stroke-linecap="round"/>
<path d="M434.7,289.9l-3,4" stroke="#f4f4f4" stroke-width="1.1" stroke-linecap="round"/>
<path d="M438.7,284.4L435,289.4" stroke="#0a0a0a" stroke-width="3" stroke-linecap="round"/>
<path d="M433.4,288.2l3,2.4" stroke="#0a0a0a" stroke-width="1.2" stroke-linecap="round"/>
<circle cx="435.6" cy="316.9" r="10.8" fill="#9a9a9a" fill-opacity="0.55" filter="url(#sh1)"/><circle cx="435" cy="316" r="10.6" fill="url(#btn)" stroke="#c2c2c2" stroke-width="0.8"/>
<path d="M429.8,316h10.4M435,310.8v10.4" stroke="#111" stroke-width="1.5"/>
<circle cx="435.6" cy="343.1" r="10.8" fill="#9a9a9a" fill-opacity="0.55" filter="url(#sh1)"/><circle cx="435" cy="342.2" r="10.6" fill="url(#btn)" stroke="#c2c2c2" stroke-width="0.8"/>
<path d="M429.8,342.2h10.4" stroke="#222" stroke-width="1.5"/>
<path d="M426.2,373 q-4.9,3.5 -4.9,10 V446.5 q0,11 11,11 h6.2 q11,0 11,-11 V383 q0,-6.5 -4.9,-10" fill="#fff" stroke="#bcbcbc" stroke-width="1.2"/>
<circle cx="435.9" cy="368.5" r="10.8" fill="#9a9a9a" fill-opacity="0.55" filter="url(#sh1)"/><circle cx="435.3" cy="367.6" r="10.6" fill="url(#btn)" stroke="#c2c2c2" stroke-width="0.8"/>
<rect x="431" y="368" width="9" height="7" rx="0.6" fill="#0c0c0c"/>
<path d="M432.7,368.2v-2.8a3,3 0 0 1 5.9,-0.9" fill="none" stroke="#0c0c0c" stroke-width="1.5"/>
<circle cx="435.6" cy="394.2" r="10.8" fill="#9a9a9a" fill-opacity="0.55" filter="url(#sh1)"/><circle cx="435" cy="393.3" r="10.6" fill="url(#btn)" stroke="#c2c2c2" stroke-width="0.8"/>
<text x="435.3" y="391.5" font-size="5.2" font-weight="bold" text-anchor="middle" fill="#333" textLength="12.8" lengthAdjust="spacing">MAX</text>
<text x="435" y="399" font-size="6.6" text-anchor="middle" fill="#555">0</text>
<circle cx="435.6" cy="419.4" r="10.8" fill="#9a9a9a" fill-opacity="0.55" filter="url(#sh1)"/><circle cx="435" cy="418.5" r="10.6" fill="url(#btn)" stroke="#c2c2c2" stroke-width="0.8"/>
<text x="434.8" y="420.6" font-size="5.5" font-weight="bold" text-anchor="middle" fill="#2a2a2a" textLength="16.8" lengthAdjust="spacing">±MAX</text>
<circle cx="435.6" cy="443.5" r="10.8" fill="#9a9a9a" fill-opacity="0.55" filter="url(#sh1)"/><circle cx="435" cy="442.6" r="10.6" fill="url(#btnk)" stroke="#c2c2c2" stroke-width="0.8"/>
<text x="435.3" y="441.9" font-size="5.2" font-weight="bold" text-anchor="middle" fill="#f0dc90" textLength="12.8" lengthAdjust="spacing">MAX</text>
<text x="435.3" y="448.9" font-size="5.2" font-weight="bold" text-anchor="middle" fill="#f0dc90" textLength="10.4" lengthAdjust="spacing">MIN</text>
</g>
<g id="rtoolbar">
<circle cx="924.4" cy="68.4" r="10.8" fill="#9a9a9a" fill-opacity="0.55" filter="url(#sh1)"/><circle cx="923.8" cy="67.5" r="10.6" fill="url(#btn)" stroke="#c2c2c2" stroke-width="0.8"/><circle cx="923" cy="65.7" r="3.9" fill="none" stroke="#222" stroke-width="1.1"/><path d="M925.4,69.1 l2.4,3.8" stroke="#1a1a1a" stroke-width="1.7" stroke-linecap="round"/><path d="M920.5,65.7h5M923,63.2v5" stroke="#111" stroke-width="1.3"/>
<circle cx="924.4" cy="94.4" r="10.8" fill="#9a9a9a" fill-opacity="0.55" filter="url(#sh1)"/><circle cx="923.8" cy="93.5" r="10.6" fill="url(#btn)" stroke="#c2c2c2" stroke-width="0.8"/><circle cx="923" cy="91.7" r="3.9" fill="none" stroke="#222" stroke-width="1.1"/><path d="M925.4,95.1 l2.4,3.8" stroke="#1a1a1a" stroke-width="1.7" stroke-linecap="round"/><path d="M920.5,91.7h5" stroke="#111" stroke-width="1.4"/>
<circle cx="924.4" cy="120.4" r="10.8" fill="#9a9a9a" fill-opacity="0.55" filter="url(#sh1)"/><circle cx="923.8" cy="119.5" r="10.6" fill="url(#btn)" stroke="#c2c2c2" stroke-width="0.8"/><circle cx="923" cy="117.7" r="3.9" fill="none" stroke="#222" stroke-width="1.1"/><path d="M925.4,121.1 l2.4,3.8" stroke="#1a1a1a" stroke-width="1.7" stroke-linecap="round"/><rect x="921.5" y="115.1" width="3" height="5.2" fill="#111"/>
<path d="M913,135.8h22" stroke="#b0b0b0" stroke-width="1"/>
<circle cx="924.4" cy="153.4" r="10.8" fill="#9a9a9a" fill-opacity="0.55" filter="url(#sh1)"/><circle cx="923.8" cy="152.5" r="10.6" fill="url(#btn)" stroke="#c2c2c2" stroke-width="0.8"/>
<path d="M920.5,148.9H930.5V157H920.5" fill="none" stroke="#111" stroke-width="1" stroke-dasharray="1.1 1.1"/>
<path d="M918.9,157.6V149" stroke="#0a0a0a" stroke-width="1.9"/><path d="M915.9,151.2l3,-3.7l3,3.7z" fill="#0a0a0a"/>
<circle cx="924.4" cy="179.9" r="10.8" fill="#9a9a9a" fill-opacity="0.55" filter="url(#sh1)"/><circle cx="923.8" cy="179" r="10.6" fill="url(#btn)" stroke="#c2c2c2" stroke-width="0.8"/>
<path d="M918,181.5V174.7H930V181" fill="none" stroke="#111" stroke-width="1" stroke-dasharray="1.1 1.1"/>
<path d="M917.6,183.3h10.6" stroke="#0a0a0a" stroke-width="1.9"/><path d="M927.4,180.4l3.7,2.9l-3.7,2.9z" fill="#0a0a0a"/>
<circle cx="924.4" cy="205.9" r="10.8" fill="#9a9a9a" fill-opacity="0.55" filter="url(#sh1)"/><circle cx="923.8" cy="205" r="10.6" fill="url(#btn)" stroke="#c2c2c2" stroke-width="0.8"/>
<path d="M927,200.8H917.2V209.5H927.2" fill="none" stroke="#111" stroke-width="1" stroke-dasharray="1.1 1.1"/>
<path d="M928.7,209.9V201" stroke="#0a0a0a" stroke-width="1.9"/><path d="M925.6,203.2l3.1,-3.8l3.1,3.8z" fill="#0a0a0a"/>
<circle cx="934.3" cy="644.3" r="5.7" fill="#8a8a8a" stroke="#707070" stroke-width="0.8"/>
<path d="M931.2,644.3h6.2M934.3,641.2v6.2" stroke="#f4f4f4" stroke-width="1.1"/>
</g>
<g id="sidebar">
<circle cx="983.3" cy="61.6" r="10.2" fill="#03659d" stroke="url(#ringD)" stroke-width="0.9"/><circle cx="983.3" cy="61.6" r="10.9" fill="none" stroke="url(#ringL)" stroke-width="0.9"/>
<path d="M979.7,55V68.6L991.1,61.8Z" fill="#fff"/>
<circle cx="983.3" cy="104.4" r="10.2" fill="#03659d" stroke="url(#ringD)" stroke-width="0.9"/><circle cx="983.3" cy="104.4" r="10.9" fill="none" stroke="url(#ringL)" stroke-width="0.9"/>
<rect x="977.8" y="98.9" width="11" height="11" rx="1" fill="#035a8e"/>
<circle cx="983.3" cy="449.1" r="10.2" fill="#03659d" stroke="url(#ringD)" stroke-width="0.9"/><circle cx="983.3" cy="449.1" r="10.9" fill="none" stroke="url(#ringL)" stroke-width="0.9"/>
<path d="M978.5,444.3h8.6l1.3,1.3v8.4h-9.9z M980.5,444.3v3.4h5.6v-3.4 M980.3,454v-3.6h6.2v3.6" fill="none" stroke="#035684" stroke-width="1"/>
<circle cx="983.3" cy="488.5" r="10.2" fill="#03659d" stroke="url(#ringD)" stroke-width="0.9"/><circle cx="983.3" cy="488.5" r="10.9" fill="none" stroke="url(#ringL)" stroke-width="0.9"/>
<path d="M978.5,483.7h8.6l1.3,1.3v8.4h-9.9z M980.5,483.7v3.4h5.6v-3.4 M980.3,493.4v-3.6h6.2v3.6" fill="none" stroke="#035684" stroke-width="1"/>
<circle cx="983.3" cy="531.3" r="10.2" fill="#03659d" stroke="url(#ringD)" stroke-width="0.9"/><circle cx="983.3" cy="531.3" r="10.9" fill="none" stroke="url(#ringL)" stroke-width="0.9"/>
<path d="M977.2,526.2h5v4h-5zM977.8,533h4.4v3.8h-4.4zM984.6,533h4.4v3.8h-4.4zM982.2,528.2h4.6v4.8M980,530.2v2.8" fill="none" stroke="#d8ecf8" stroke-width="1"/>
<circle cx="983.3" cy="574.9" r="10.2" fill="#03659d" stroke="url(#ringD)" stroke-width="0.9"/><circle cx="983.3" cy="574.9" r="10.9" fill="none" stroke="url(#ringL)" stroke-width="0.9"/>
<path d="M983.3,571.8v9" stroke="#fff" stroke-width="1.5"/><circle cx="983.3" cy="568.8" r="1" fill="#fff"/>
<circle cx="983.3" cy="617.4" r="10.2" fill="#03659d" stroke="url(#ringD)" stroke-width="0.9"/><circle cx="983.3" cy="617.4" r="10.9" fill="none" stroke="url(#ringL)" stroke-width="0.9"/>
<text x="983.3" y="623.3" font-size="16" text-anchor="middle" fill="#fff">?</text>
<circle cx="983.3" cy="660.2" r="10.2" fill="#03659d" stroke="url(#ringD)" stroke-width="0.9"/><circle cx="983.3" cy="660.2" r="10.9" fill="none" stroke="url(#ringL)" stroke-width="0.9"/>
<path d="M978.7,654.9l9.4,11.2M988.1,654.9l-9.4,11.2" stroke="#fff" stroke-width="1.35"/>
</g>
<g id="bottombar">
<circle cx="31.9" cy="672.9" r="9.2" fill="#03659d" stroke="url(#ringD)" stroke-width="0.9"/><circle cx="31.9" cy="672.9" r="9.9" fill="none" stroke="url(#ringL)" stroke-width="0.9"/>
<circle cx="52.9" cy="672.9" r="9.2" fill="#03659d" stroke="url(#ringD)" stroke-width="0.9"/><circle cx="52.9" cy="672.9" r="9.9" fill="none" stroke="url(#ringL)" stroke-width="0.9"/>
<path d="M35.2,668.3v9.6L27,673.1Z" fill="#fff"/>
<path d="M49.8,668.3v9.6L58,673.1Z" fill="#fff"/>
<path d="M10.6,662.4a3.9,3.9 0 1 1 -0.9,5.2" fill="none" stroke="#fff" stroke-width="1.4"/>
<path d="M8.8,664.6l4,0.3l-2.2,3.1z" fill="#fff"/>
<path d="M8.9,683.8a4.5,4.5 0 0 1 9,0z" fill="#5f9cc4" fill-opacity="0.55" stroke="#cfe2f0" stroke-width="0.8"/>
<path d="M13.4,683.8v-4.4M13.4,683.8l-3.2,-3.1M13.4,683.8l3.2,-3.1M10.9,683.8a2.5,2.5 0 0 1 5,0" fill="none" stroke="#e4f0f8" stroke-width="0.6"/>
<path d="M7.4,683.4v3.2h3.2z" fill="#fff"/>
<rect x="77.4" y="667.4" width="724" height="12.2" fill="#fff"/>
<rect x="72" y="672.2" width="730" height="2.6" fill="#dcdfdc"/>
<rect x="801.4" y="668.3" width="6.7" height="10.7" fill="#0a78dc"/>
<rect x="808.1" y="672.3" width="1" height="2.4" fill="#6ab0ea"/>
<path d="M72.6,662.3h4l-2,2.6z M72.6,683.2h4l-2,-2.6z M802.3,662.3h4l-2,2.6z M802.3,683.2h4l-2,-2.6z" fill="#fff"/>
<rect x="930.9" y="664.2" width="6.2" height="2.6" fill="#fff"/>
<path d="M930,662l1.6,2.2M938,662l-1.6,2.2M930,669l1.6,-2.2M938,669l-1.6,-2.2" stroke="#fff" stroke-width="0.9"/>
<path d="M929.7,661.7h1.2v1.2h-1.2zM937.1,661.7h1.2v1.2h-1.2zM929.7,668.1h1.2v1.2h-1.2zM937.1,668.1h1.2v1.2h-1.2z" fill="#fff"/>
<rect x="882.8" y="674.8" width="58" height="12" fill="#fff" stroke="#9ab0c0" stroke-width="0.8"/>
<rect x="930.5" y="675.5" width="9.5" height="10.6" fill="#e8e8e8" stroke="#b0b0b0" stroke-width="0.6"/>
<path d="M933.4,679.6h3.8l-1.9,-2.4zM933.4,682h3.8l-1.9,2.4z" fill="#222"/>
<text x="886" y="684" font-size="8.5" fill="#222">39</text>
</g>
<rect x="0" y="364.5" width="3.2" height="9.5" rx="1.2" fill="#0a0a0a"/>
</svg>
<div class="lbl" style="top:75.2px;color:#fff;left:943.3px;width:80px;font-size:9.5px;transform:scaleX(0.885);">Start</div>
<div class="lbl" style="top:118.2px;color:#fff;left:943.3px;width:80px;font-size:9.5px;transform:scaleX(0.885);">Stop</div>
<div class="lbl" style="top:459.5px;color:#fff;left:943.3px;width:80px;font-size:9.5px;transform:scaleX(0.885);">Save</div>
<div class="lbl" style="top:502.4px;color:#fff;left:943.3px;width:80px;font-size:9.5px;transform:scaleX(0.885);">Save as ...</div>
<div class="lbl" style="top:545.2px;color:#fff;left:943.3px;width:80px;font-size:9.5px;transform:scaleX(0.885);">Methods</div>
<div class="lbl" style="top:588.4px;color:#fff;left:943.3px;width:80px;font-size:9.5px;transform:scaleX(0.885);">Information</div>
<div class="lbl" style="top:630.9px;color:#fff;left:943.3px;width:80px;font-size:9.5px;transform:scaleX(0.885);">Help</div>
<div class="lbl" style="top:670.3px;color:#fff;left:943.3px;width:80px;font-size:9.5px;transform:scaleX(0.885);">Exit</div>
<div class="abs" style="left:565.7px;top:24.2px;color:#fff;font-size:9.5px;font-weight:bold;white-space:nowrap;transform-origin:0 50%;transform:scaleX(0.885);">Project tree</div>
<div class="abs" style="left:720.7px;top:24.2px;color:#fff;font-size:9.5px;font-weight:bold;white-space:nowrap;transform-origin:0 50%;transform:scaleX(0.885);">Strain/Displacement</div>
<div class="abs" style="left:926px;top:24.2px;color:#e6f0a0;font-size:9.5px;font-weight:bold;white-space:nowrap;transform-origin:0 50%;transform:scaleX(0.885);">Plot</div>
<div class="abs" style="left:818.3px;top:675.6px;color:#fff;font-size:9.5px;font-weight:bold;white-space:nowrap;transform-origin:0 50%;transform:scaleX(0.885);">Image number:</div>
</body></html>
